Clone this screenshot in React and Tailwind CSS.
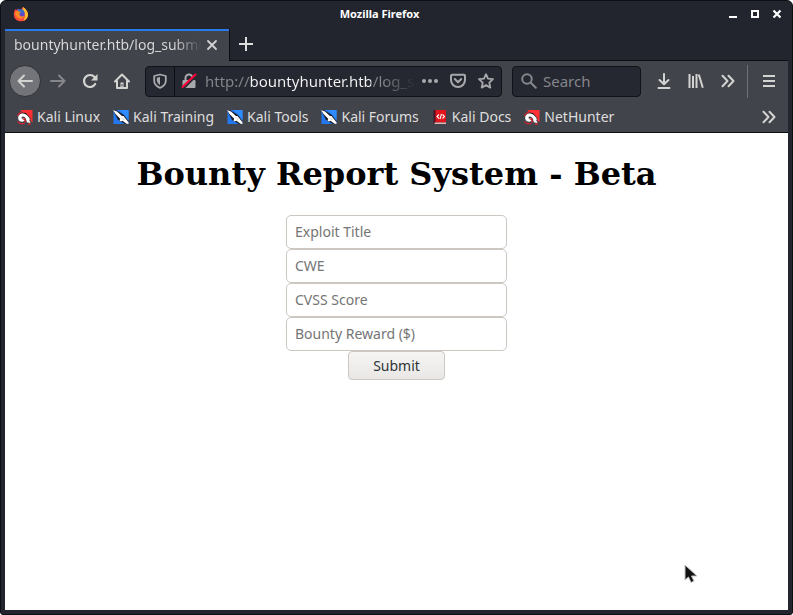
import React from "react";

function FirefoxLogo() {
  return (
    <svg className="h-4 w-4 shrink-0" viewBox="0 0 16 16" aria-hidden="true">
      <path d="M2.200 3.200 3.400 4.300 5 2.200 5.600 4 8 3.600 10 1c1.200 1 2 1.800 2.600 3l.7.2C15 6.500 15.400 8.500 14.500 11 13.400 13.800 11 15.300 8 15.300 4 15.300.8 12.300.8 8.400.8 6.300 1.500 4.600 2.200 3.200z" fill="#ff4a3d" />
      <path d="M10 1c3 2 5 4.500 5 7.800 0 3-2 5.200-4.500 6C12 12 12.300 9 11.500 7 10.600 5 9.500 3.500 10 1z" fill="#ffbd2e" />
      <circle cx="8" cy="8.200" r="3.600" fill="#6148c9" />
      <path d="M4.500 3 9.500 3.500c1.500.8 2 2 2 3.800L8.500 6.500 7.200 8 5 6.500z" fill="#2f6fd0" />
      <path d="M2 7c1-2 2.500-2.500 4-1.500l2 .3-1.300 1.400c-.7 2 .6 3.400 2.600 3.200l2-.6C10.500 12.200 8.800 13 7 12.600 4 12 2 10 2 7z" fill="#ff8a24" />
    </svg>
  );
}

function DragonIcon() {
  return (
    <svg className="h-4 w-4 shrink-0" viewBox="0 0 16 16" aria-hidden="true">
      <path d="M3 1h12.500v12.500z" fill="#ff3035" />
      <path d="M5 3.500 9 4l5 6-2 1-4-4z" fill="#191a20" />
      <path d="M1.200 9.500C.8 6 4 3.800 7.300 4.800c2.700.8 4.400 3 6 5.700l-1.300.2 1.500 3.300-3.700-.8C9.300 9.800 8 7.500 6 7.500c-1.600 0-2 1.700-.8 2.300l1.600-.7 1.200 2.200-2.300 1.500C3.300 13 1.500 11.800 1.200 9.500z" fill="#fff" />
      <path d="M.5 7C1.200 5 3 3.700 5 3.700M.5 12.500 3 14.700h4.500M11 15h3" stroke="#cf2530" strokeWidth="1.300" fill="none" />
      <path d="M5 10 8 8.700l1.300 4.300-2 .8.200-2.500z" fill="#cf2530" />
    </svg>
  );
}

function KnifeIcon() {
  return (
    <svg className="h-4 w-4 shrink-0" viewBox="0 0 16 16" aria-hidden="true">
      <path d="M.5 1h15v14H.5z" fill="#2378f0" />
      <path d="M7 1h8.500v10z" fill="#2f8cff" />
      <path d="M0 1h3l8 5 4.500 6v3H12L5 11z" fill="#191c25" />
      <path d="m0 1 4 1.500L9 7l1.500 0 5 6.300v1.700l-2-.3L9.500 11.700l-1.500.8-1.500-1 .700-1.700L2.500 5z" fill="#fff" />
      <path d="m9 8.500 2.500 2.500" stroke="#bbb" strokeWidth=".8" />
    </svg>
  );
}

function DocsIcon() {
  return (
    <svg className="h-4 w-4 shrink-0" viewBox="0 0 16 16" aria-hidden="true">
      <path d="M1.500 1h3v14h-3z" fill="#4a1228" />
      <path d="M3.500 1h10.500v12.500H3.500z" fill="#e3141b" />
      <path d="M2.500 13.500H14V15H2.500z" fill="#d7b9bd" />
      <path d="M7 5.500 5 7.500l2 2M10.500 5.500l2 2-2 2M9.500 4.800 8 10.200" stroke="#fff" fill="none" strokeWidth="1.100" />
    </svg>
  );
}

function Chevrons() {
  return (
    <svg className="h-4 w-4" viewBox="0 0 16 16" fill="none" stroke="currentColor" strokeWidth="2" strokeLinecap="round" strokeLinejoin="round" aria-hidden="true">
      <path d="m2.500 2.800 5 5.200-5 5.200M8.500 2.800l5 5.200-5 5.200" />
    </svg>
  );
}

const bookmarks = [
  ["Kali Linux", DragonIcon],
  ["Kali Training", KnifeIcon],
  ["Kali Tools", KnifeIcon],
  ["Kali Forums", KnifeIcon],
  ["Kali Docs", DocsIcon],
  ["NetHunter", DragonIcon],
];

const fields = ["Exploit Title", "CWE", "CVSS Score", "Bounty Reward ($)"];

function ToolButton({ label, className = "", children }) {
  return (
    <button type="button" aria-label={label} className={`flex h-8 w-8 shrink-0 items-center justify-center ${className}`}>
      {children}
    </button>
  );
}

function TitleBar() {
  return (
    <header className="flex h-7 items-center pb-0.5 pl-2">
      <FirefoxLogo />
      <div className="flex-1 pl-2 text-center text-[11px] leading-4 font-bold text-white">Mozilla Firefox</div>
      <div className="flex text-white">
        <button type="button" aria-label="Minimize" className="flex h-6 w-[22px] items-center justify-center">
          <svg className="h-3 w-3" viewBox="0 0 12 12"><path d="M2 8h8v2H2z" fill="currentColor" /></svg>
        </button>
        <button type="button" aria-label="Maximize" className="flex h-6 w-[22px] items-center justify-center">
          <svg className="h-3 w-3" viewBox="0 0 12 12"><path d="M3 3h6v6H3z" fill="none" stroke="currentColor" strokeWidth="2" /></svg>
        </button>
        <button type="button" aria-label="Close window" className="flex h-6 w-[22px] items-center justify-center">
          <svg className="h-3 w-3" viewBox="0 0 12 12"><path d="m2.500 2.500 7 7m0-7-7 7" stroke="currentColor" strokeWidth="2.200" /></svg>
        </button>
      </div>
    </header>
  );
}

function TabStrip() {
  return (
    <div className="flex h-8 items-stretch">
      <div className="flex w-[224px] items-center border-t-2 border-[#2a7bea] bg-[#42444b] pr-[7px] pb-0.5 pl-[9px]">
        <span className="flex-1 overflow-hidden bg-linear-to-r from-[#dcdcdd] from-85% to-transparent to-100% bg-clip-text text-sm whitespace-nowrap text-transparent">
          bountyhunter.htb/log_submit.php
        </span>
        <button type="button" aria-label="Close tab" className="flex h-5 w-5 items-center justify-center text-[#d3d3d4]">
          <svg className="h-3 w-3" viewBox="0 0 12 12"><path d="m2 2 8 8m0-8-8 8" stroke="currentColor" strokeWidth="1.800" strokeLinecap="round" /></svg>
        </button>
      </div>
      <div className="flex flex-1 items-center border-b border-l border-[#0c0d12] pb-0.5">
        <ToolButton label="New tab" className="text-[#dedede]">
          <svg className="h-4 w-4" viewBox="0 0 16 16"><path d="M8 1v14M1 8h14" stroke="currentColor" strokeWidth="2" /></svg>
        </ToolButton>
      </div>
    </div>
  );
}

function NavBar() {
  return (
    <nav className="flex h-10 items-center pr-[3px] pl-1 text-[#d3d3d1]">
      <ToolButton label="Back" className="mr-px rounded-full border border-[#303137] bg-[#737479]">
        <svg className="h-4 w-4" viewBox="0 0 16 16" fill="none" stroke="currentColor" strokeWidth="2" strokeLinecap="round" strokeLinejoin="round"><path d="M15 8H1.500M7 2.500 1.500 8 7 13.500" /></svg>
      </ToolButton>
      <ToolButton label="Forward" className="text-[#85868a]">
        <svg className="h-4 w-4" viewBox="0 0 16 16" fill="none" stroke="currentColor" strokeWidth="2" strokeLinecap="round" strokeLinejoin="round"><path d="M1 8h13.500M9 2.500 14.500 8 9 13.500" /></svg>
      </ToolButton>
      <ToolButton label="Reload">
        <svg className="h-4 w-4" viewBox="0 0 16 16" fill="none" stroke="currentColor" strokeWidth="2.200" strokeLinecap="round"><path d="M13.200 11A6 6 0 1 1 12.500 4" /><path d="M15.500 1v6.500H9z" fill="currentColor" stroke="none" /></svg>
      </ToolButton>
      <ToolButton label="Home">
        <svg className="h-4 w-4" viewBox="0 0 16 16" fill="none" stroke="currentColor" strokeWidth="2" strokeLinecap="round" strokeLinejoin="round"><path d="M1 8.500 8 1.500l7 7M3 8v7h10V8" /><path d="M6.500 9.500h3V15h-3z" fill="currentColor" stroke="none" /><path d="M8 11.500v1.500" stroke="#42444b" strokeWidth="1" /></svg>
      </ToolButton>

      <div className="ml-[7px] flex h-[31px] min-w-0 flex-1 items-center rounded-[4px] border border-[#121318] bg-[#262831] text-[#a8a9ac]">
        <button type="button" aria-label="Tracking protection" className="flex h-full w-[29px] items-center justify-center border-r border-[#0c0d12]">
          <svg className="h-4 w-4" viewBox="0 0 16 16" fill="none" stroke="currentColor" strokeWidth="1.800" strokeLinejoin="round"><path d="M8 1.500 13.800 3v4.500c0 3.500-2.300 6-5.800 7.300-3.500-1.300-5.800-3.800-5.800-7.300V3z" /><path d="M8 4v8C5.800 10.800 4.800 9 4.800 7V4.800z" fill="currentColor" stroke="none" /></svg>
        </button>
        <button type="button" aria-label="Connection is not secure" className="flex h-full w-[28px] items-center justify-center">
          <svg className="h-4 w-4" viewBox="0 0 16 16" fill="none"><path d="M4.500 8V5a3.500 3.500 0 0 1 7 0v3" stroke="currentColor" strokeWidth="2" /><path d="M2.500 7h11a1 1 0 0 1 1 1v6a1 1 0 0 1-1 1h-11a1 1 0 0 1-1-1V8a1 1 0 0 1 1-1z" fill="currentColor" /><path d="M2.300 15.700 15.500 2.500" stroke="#262831" strokeWidth="2" /><path d="m1.500 14 13-12.500" stroke="#ff0039" strokeWidth="2" strokeLinecap="round" /></svg>
        </button>
        <input
          aria-label="Address"
          readOnly
          value="http://bountyhunter.htb/log_submit.php"
          className="ml-[2px] min-w-0 flex-1 bg-linear-[90deg,#85868b_44px,#f4f4f5_44px,#f4f4f5_166px,#85868b_166px,#85868b_178px,transparent_211px] bg-clip-text text-[15px] leading-6 text-transparent outline-none"
        />
        <div className="flex shrink-0 items-center pr-px">
          <button type="button" aria-label="Page actions" className="flex h-7 w-7 items-center justify-center">
            <svg className="h-4 w-4" viewBox="0 0 16 16" fill="currentColor"><circle cx="2" cy="8" r="2" /><circle cx="8" cy="8" r="2" /><circle cx="14" cy="8" r="2" /></svg>
          </button>
          <button type="button" aria-label="Save to Pocket" className="flex h-7 w-7 items-center justify-center">
            <svg className="h-4 w-4" viewBox="0 0 16 16" fill="none" stroke="currentColor" strokeWidth="2" strokeLinecap="round" strokeLinejoin="round"><path d="M2 1.800h12a1 1 0 0 1 1 1V7A7 7 0 0 1 1 7V2.800a1 1 0 0 1 1-1z" /><path d="M4.800 6 8 9.200 11.200 6" /></svg>
          </button>
          <button type="button" aria-label="Bookmark this page" className="flex h-7 w-7 items-center justify-center">
            <svg className="h-4 w-4" viewBox="0 0 16 16" fill="none" stroke="currentColor" strokeWidth="1.800" strokeLinejoin="round"><path d="m8 1.200 2 4.500 5 .5-3.700 3.400 1 5L8 12.100l-4.300 2.500 1-5L1 6.200l5-.5z" /></svg>
          </button>
        </div>
      </div>

      <label className="mr-[7px] ml-2.5 flex h-[31px] w-[129px] items-center gap-1.5 rounded-[4px] border border-[#121318] bg-[#262831] px-2 text-[#85868b]">
        <svg className="h-4 w-4 shrink-0" viewBox="0 0 16 16" fill="none" stroke="currentColor" strokeWidth="2" strokeLinecap="round"><circle cx="6" cy="6" r="4.800" /><path d="m9.800 9.800 5 5" /></svg>
        <input aria-label="Search" placeholder="Search" className="w-full min-w-0 bg-transparent text-[15px] leading-6 outline-none placeholder:text-[#85868b]" />
      </label>

      <div className="flex items-center">
        <ToolButton label="Downloads">
          <svg className="h-4 w-4" viewBox="0 0 16 16" fill="none" stroke="currentColor" strokeWidth="2" strokeLinecap="round" strokeLinejoin="round"><path d="M8 1v10M3.500 7 8 11.300 12.500 7M2.500 15h11" /></svg>
        </ToolButton>
        <ToolButton label="Library">
          <svg className="h-4 w-4" viewBox="0 0 16 16" fill="none" stroke="currentColor" strokeWidth="2"><path d="M1.500 1v14M5 3v12M8.500 1v14M10.800 1.500l4 13.200" /></svg>
        </ToolButton>
        <ToolButton label="More tools"><Chevrons /></ToolButton>
        <div className="mr-[5px] ml-[3px] h-[33px] w-px bg-[#707176]" />
        <ToolButton label="Open menu">
          <svg className="h-4 w-4" viewBox="0 0 16 16" stroke="currentColor" strokeWidth="2"><path d="M2 3h12M2 8h12M2 13h12" /></svg>
        </ToolButton>
      </div>
    </nav>
  );
}

function BookmarksBar() {
  return (
    <div className="flex h-8 items-center border-b border-[#0c0d12] pr-[3px] pl-3 text-[#dedede]">
      <div className="flex flex-1 gap-[13px]">
        {bookmarks.map(([name, Icon]) => (
          <a key={name} href="#" className="flex items-center gap-1 text-sm whitespace-nowrap">
            <Icon />
            {name}
          </a>
        ))}
      </div>
      <ToolButton label="More bookmarks" className="text-[#d3d3d1]"><Chevrons /></ToolButton>
    </div>
  );
}

export default function App() {
  return (
    <div className="min-h-screen bg-white">
      <div className="relative flex min-h-screen flex-col rounded-t-md rounded-b-[3px] border border-[#0e0f14] bg-[#23252e] px-1 pb-1 font-['Noto_Sans',sans-serif]">
        <TitleBar />
        <TabStrip />
        <div className="bg-[#42444b]">
          <NavBar />
          <BookmarksBar />
        </div>
        <main className="flex-1 bg-white pt-[23px] text-center">
          <h1 className="font-['DejaVu_Serif',serif] text-[32px] leading-[37px] font-bold text-black">Bounty Report System - Beta</h1>
          <form className="mt-[22px] flex flex-col items-center" onSubmit={(e) => e.preventDefault()}>
            {fields.map((name) => (
              <input
                key={name}
                aria-label={name}
                placeholder={name}
                className="h-[34px] w-[221px] rounded-[5px] border border-[#cdc7c2] bg-white px-2 pb-0.5 text-sm outline-none placeholder:text-[#757575]"
              />
            ))}
            <button type="submit" className="h-[29px] w-[97px] rounded-[4px] border border-[#cdc7c2] bg-linear-to-b from-[#f6f5f4] to-[#e8e7e6] text-sm text-[#2e3436]">
              Submit
            </button>
          </form>
        </main>
        <svg className="pointer-events-none absolute right-[94px] bottom-[30px] h-5 w-3.5" viewBox="0 0 14 20" aria-hidden="true">
          <path d="M1 1v15l3.500-3 2.500 5.500 3-1.500-2.500-5H13z" fill="#111" stroke="#c4c4c4" strokeWidth="1" />
        </svg>
      </div>
    </div>
  );
}
